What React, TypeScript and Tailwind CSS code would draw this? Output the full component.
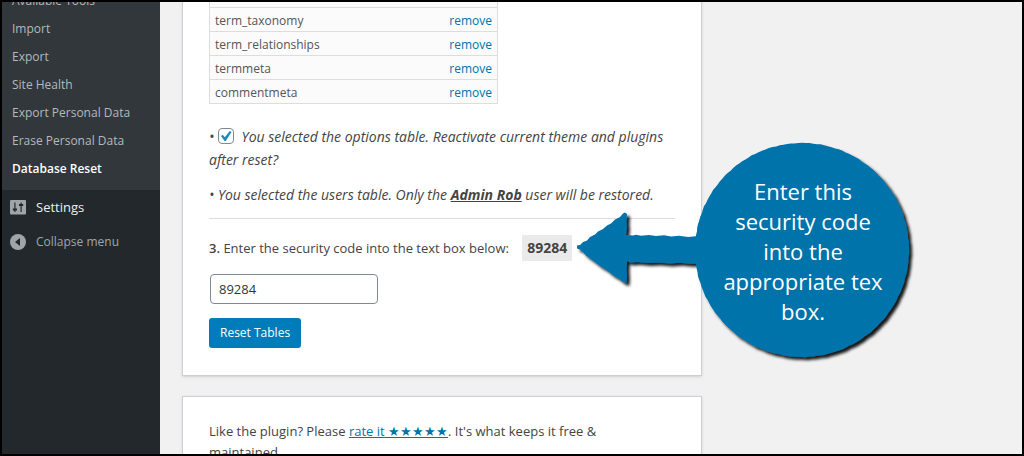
const toolLinks = [
  'Available Tools',
  'Import',
  'Export',
  'Site Health',
  'Export Personal Data',
  'Erase Personal Data',
  'Database Reset',
];

const tables = ['terms', 'term_taxonomy', 'term_relationships', 'termmeta', 'commentmeta'];

function SettingsIcon() {
  return (
    <svg className="size-5 shrink-0" viewBox="0 0 20 20" aria-hidden="true">
      <path
        fill="#a0a5aa"
        fillRule="evenodd"
        d="M3 2h14q1 0 1 1v12.500q0 1-1 1H3q-1 0-1-1V3q0-1 1-1zM6.300 4.500v6H4.800v2h1.500V14h1.200v-1.500h1.500v-2H7.500v-6zM12.500 4.500V6H11v2h1.500v6h1.200V8h1.500V6h-1.500V4.500z"
      />
    </svg>
  );
}

function CollapseIcon() {
  return (
    <svg className="size-5 shrink-0" viewBox="0 0 20 20" aria-hidden="true">
      <circle cx="10" cy="10" r="8" fill="#a0a5aa" />
      <path d="M12 6v8l-5-4z" fill="#23282d" />
    </svg>
  );
}

function Sidebar() {
  return (
    <nav className="w-[158px] shrink-0 bg-[#23282d]" aria-label="Admin menu">
      <ul className="-mt-[15px] bg-[#32373c] pb-[7px]">
        {toolLinks.map((label) => (
          <li key={label}>
            <a
              href="#"
              className={
                label === 'Database Reset'
                  ? 'block px-[10px] text-xs leading-7 font-semibold text-white'
                  : 'block px-[10px] text-xs leading-7 text-[#b4b9be]'
              }
            >
              {label}
            </a>
          </li>
        ))}
      </ul>
      <a href="#" className="flex h-9 items-center gap-2 px-[6px] text-[13px] text-[#eeeeee]">
        <SettingsIcon />
        Settings
      </a>
      <button type="button" className="flex h-8 w-full items-center gap-2 px-[6px] text-xs text-[#a0a5aa]">
        <CollapseIcon />
        Collapse menu
      </button>
    </nav>
  );
}

// A circle with a slightly uneven, torn-paper rim.
const rim = Array.from({ length: 180 }, (_, i) => {
  const angle = (i * Math.PI) / 90;
  const radius = 107 + 0.2 * Math.sin(i * 2.3) + 0.15 * Math.sin(i * 1.3 + 1);
  return `${(232 + radius * Math.cos(angle)).toFixed(2)},${(114 + radius * Math.sin(angle)).toFixed(2)}`;
}).join(' ');

function Callout() {
  return (
    <div className="absolute top-[134px] left-[568px] h-[232px] w-[350px]">
      <svg className="absolute inset-0 size-full overflow-visible" viewBox="0 0 350 232" aria-hidden="true">
        <defs>
          <filter id="shadow" x="-5%" y="-5%" width="112%" height="112%">
            <feDropShadow dx="3" dy="3" stdDeviation="1.500" floodColor="#000000" floodOpacity="0.9" />
          </filter>
        </defs>
        <g filter="url(#shadow)" fill="#0073aa">
          <path d="M7 109.500L10 109L13 106L17 104.500L20 101L25 98.500L28 95.500L33 93L37 89.500L41 87.500L45 83.500L50 81L53 77.500L55 76.500L57 78L56.500 86L57 91L56 99L63 99.500L66 98.800L71 99.800L79 99L86 100L94 99.300L101 100.500L109 99.800L118 101L126 100.300L135 101V127.500L120 127.800L110 126.800L100 127.500L88 126.500L78 127L68 126L60 126.500L57 125L56.500 133L57 140L56.500 147L53 146L48 142L42 138.500L36 133.500L30 130L23 124.500L16 119.500L11 114L7 112.500z" />
          <polygon points={rim} />
        </g>
      </svg>
      <p className="absolute top-[40px] left-[143px] w-[180px] text-center text-[22px] leading-[30px] text-white">
        Enter this security code into the appropriate tex box.
      </p>
    </div>
  );
}

export default function App() {
  return (
    <div className="relative flex h-screen overflow-hidden border-2 border-black bg-[#f1f1f1] font-['Open_Sans','Noto_Sans',sans-serif] text-xs text-[#444444]">
      <Sidebar />
      <main className="flex-1 pl-[22px]">
        <section className="-mt-5 max-w-[520px] border border-[#ccd0d4] bg-white px-[26px] pb-[27px] shadow-sm">
          <table className="w-[289px] border-collapse">
            <tbody>
              {tables.map((name) => (
                <tr key={name} className="h-6 border border-[#dddddd] bg-[#fbfbfb]">
                  <td className="px-[5px] pt-0.5 text-[#555555]">{name}</td>
                  <td className="px-[5px] pt-0.5 text-right">
                    <a href="#" className="text-[#0073aa]">remove</a>
                  </td>
                </tr>
              ))}
            </tbody>
          </table>
          <p className="mt-[21px] text-sm leading-[23px] italic">
            <label>
              •{' '}
              <span className="relative mr-1 mb-1 inline-block size-4 align-middle">
                <input
                  type="checkbox"
                  defaultChecked
                  className="block size-4 appearance-none rounded border border-[#7e8993] bg-white"
                />
                <svg className="pointer-events-none absolute inset-0 size-4" viewBox="0 0 16 16" aria-hidden="true">
                  <path d="M3 8l1.800-1.200 2 2.400L11.800 3l1.700 1-5.700 9H6.600z" fill="#1e8cbe" />
                </svg>
              </span>{' '}
              You selected the options table. Reactivate current theme and plugins after reset?
            </label>
          </p>
          <p className="mt-3 text-sm leading-[23px] italic">
            • You selected the users table. Only the <b className="underline">Admin Rob</b> user will be restored.
          </p>
          <hr className="mt-3 border-[#dddddd]" />
          <p className="mt-4 text-[13px] leading-[26px]">
            <label htmlFor="code">
              <b className="font-semibold">3.</b> Enter the security code into the text box below:
            </label>{' '}
            <strong className="ml-2.5 inline-block bg-[#eaeaea] px-[5px] text-sm leading-[26px]">89284</strong>
          </p>
          <input
            id="code"
            type="text"
            defaultValue="89284"
            className="mt-[13px] ml-px block h-[30px] w-[168px] rounded border border-[#7e8993] bg-white px-2 text-[13px] text-[#32373c]"
          />
          <button type="button" className="mt-[14px] block h-[30px] rounded-[3px] bg-[#007cba] px-[11px] text-white">
            Reset Tables
          </button>
        </section>
        <section className="mt-5 max-w-[520px] border border-[#ccd0d4] bg-white px-[26px] py-6 shadow-sm">
          <p className="max-w-[440px] text-[13px] leading-[21px]">
            Like the plugin? Please{' '}
            <a href="#" className="text-[#0073aa] underline">rate it ★★★★★</a>. It's what keeps it free &amp; maintained.
          </p>
        </section>
      </main>
      <Callout />
    </div>
  );
}
